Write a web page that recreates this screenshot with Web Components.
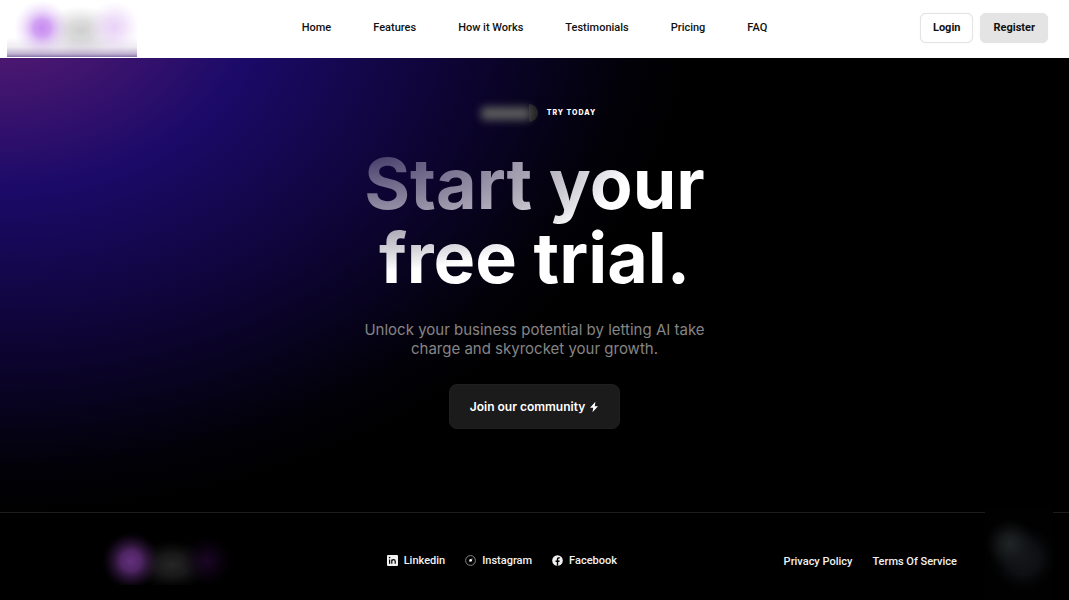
<!DOCTYPE html>
<html lang="en">
<head>
<meta charset="utf-8">
<meta name="viewport" content="width=device-width, initial-scale=1">
<title>Start your free trial</title>
<style>
  body { margin: 0; background: #000; font-family: Inter, "Liberation Sans", sans-serif; }
</style>
</head>
<body>
<landing-page></landing-page>

<script>
const define = (name, html) => {
  const template = document.createElement('template');
  template.innerHTML = html;
  customElements.define(name, class extends HTMLElement {
    constructor() {
      super();
      this.attachShadow({ mode: 'open' }).append(template.content.cloneNode(true));
    }
  });
};

define('header-logo', `
  <style>
    :host { display: block; width: 130px; height: 57px; }
    svg { display: block; width: 100%; height: 100%; }
  </style>
  <svg viewBox="0 0 130 57" aria-hidden="true">
    <defs>
      <radialGradient id="violet"><stop offset="0" stop-color="#c88cf0"/><stop offset=".3" stop-color="#cd98f2" stop-opacity=".9"/><stop offset=".65" stop-color="#dcb8f6" stop-opacity=".42"/><stop offset="1" stop-color="#ead2fa" stop-opacity="0"/></radialGradient>
      <radialGradient id="gray"><stop offset="0" stop-color="#cfcfcf"/><stop offset=".4" stop-color="#d4d4d4" stop-opacity=".8"/><stop offset="1" stop-color="#ddd" stop-opacity="0"/></radialGradient>
      <radialGradient id="pink"><stop offset="0" stop-color="#e9d2f8"/><stop offset=".4" stop-color="#ecd8f9" stop-opacity=".75"/><stop offset="1" stop-color="#f2e4fb" stop-opacity="0"/></radialGradient>
      <linearGradient id="edge" x1="0" y1="0" x2="0" y2="1">
        <stop offset="0" stop-color="#8a72a4" stop-opacity="0"/>
        <stop offset=".5" stop-color="#8a72a4" stop-opacity=".14"/>
        <stop offset=".85" stop-color="#7c62a0" stop-opacity=".5"/>
        <stop offset="1" stop-color="#72559a" stop-opacity=".85"/>
      </linearGradient>
    </defs>
    <rect width="130" height="57" fill="#fff"/>
    <ellipse cx="74" cy="31" rx="40" ry="25" fill="url(#gray)"/>
    <ellipse cx="107" cy="27" rx="26" ry="26" fill="url(#pink)"/>
    <ellipse cx="35" cy="28" rx="28" ry="28" fill="url(#violet)"/>
    <rect y="37" width="130" height="20" fill="url(#edge)"/>
  </svg>`);

define('nav-link', `
  <style>
    :host { display: block; }
    a { display: block; color: #111; font: 500 11px/16px Roboto, "Liberation Sans", sans-serif; text-decoration: none; white-space: nowrap; }
  </style>
  <a href="#"><slot></slot></a>`);

define('nav-button', `
  <style>
    :host { display: block; }
    button { display: block; box-sizing: border-box; height: 30px; padding: 0 12px; border: 1px solid #e4e4e4; border-radius: 6px;
      background: #fff; color: #111; font: 700 11px/16px Roboto, "Liberation Sans", sans-serif; box-shadow: 0 0 1px #ddd; }
    :host([filled]) button { background: #e4e4e4; }
  </style>
  <button type="button"><slot></slot></button>`);

define('site-header', `
  <style>
    :host { display: grid; grid-template-columns: 1fr auto 1fr; align-items: center; height: 58px; padding: 0 21px 0 7px; background: #fff; }
    header-logo { align-self: start; }
    nav { display: flex; gap: 42px; padding: 0 0 2px 14px; }
    .actions { display: flex; gap: 7px; justify-content: flex-end; padding-bottom: 3px; }
  </style>
  <header-logo></header-logo>
  <nav>
    <nav-link>Home</nav-link><nav-link>Features</nav-link><nav-link>How it Works</nav-link>
    <nav-link>Testimonials</nav-link><nav-link>Pricing</nav-link><nav-link>FAQ</nav-link>
  </nav>
  <div class="actions"><nav-button>Login</nav-button><nav-button filled>Register</nav-button></div>`);

define('try-badge', `
  <style>
    :host { display: flex; align-items: center; gap: 8px; color: #fff; font-size: 7px; line-height: 20px; font-weight: 800; letter-spacing: 1px; }
    svg { display: block; width: 66px; height: 20px; }
  </style>
  <svg viewBox="0 0 66 20" overflow="visible" aria-hidden="true">
    <defs><filter id="soft" x="-30%" y="-80%" width="160%" height="260%" color-interpolation-filters="sRGB"><feGaussianBlur stdDeviation="4"/></filter></defs>
    <path d="M56 1a9 9 0 0 1 0 18z" fill="#222"/>
    <rect x="8" y="4" width="50" height="13" rx="4" fill="#5c5c5c" filter="url(#soft)"/>
  </svg>
  <span><slot></slot></span>`);

define('cta-button', `
  <style>
    :host { display: block; }
    button { display: flex; align-items: center; gap: 4px; height: 45px; padding: 0 20px; border: 1px solid #202020; border-radius: 8px;
      background: #1b1b1b; color: #fff; font: 600 12px/16px Inter, "Liberation Sans", sans-serif; }
    svg { width: 10px; height: 12px; }
  </style>
  <button type="button"><slot></slot>
    <svg viewBox="0 0 10 12" fill="#fff" aria-hidden="true"><path d="M6.4.8 1 6.8h3.2L3.5 11.3 9 5.2H5.8z"/></svg>
  </button>`);

define('trial-hero', `
  <style>
    :host { display: flex; flex-direction: column; align-items: center; padding: 45px 24px 83px; text-align: center; }
    h1 { margin: 24px 0 0; font-size: 70px; line-height: 74px; font-weight: 700;
      color: transparent; background: radial-gradient(ellipse 80% 84% at 0 0, #3a3060 0%, #787190 35%, #b4b0bc 70%, #dedde2 88%, #fff 100%);
      -webkit-background-clip: text; background-clip: text; }
    p { margin: 25px 0 0; color: #858585; font-size: 15px; line-height: 19px; }
    cta-button { margin-top: 26px; }
  </style>
  <try-badge>TRY TODAY</try-badge>
  <h1>Start your<br>free trial.</h1>
  <p>Unlock your business potential by letting AI take<br>charge and skyrocket your growth.</p>
  <cta-button>Join our community</cta-button>`);

define('footer-logo', `
  <style>
    :host { display: block; width: 108px; height: 64px; }
    svg { display: block; width: 100%; height: 100%; }
  </style>
  <svg viewBox="0 0 108 64" overflow="visible" aria-hidden="true">
    <defs>
      <radialGradient id="violet"><stop offset="0" stop-color="#62307c"/><stop offset=".35" stop-color="#58296f" stop-opacity=".9"/><stop offset=".7" stop-color="#3a1a4a" stop-opacity=".45"/><stop offset="1" stop-color="#200c2c" stop-opacity="0"/></radialGradient>
      <radialGradient id="gray"><stop offset="0" stop-color="#262626"/><stop offset=".45" stop-color="#202020" stop-opacity=".75"/><stop offset="1" stop-color="#111" stop-opacity="0"/></radialGradient>
      <radialGradient id="plum"><stop offset="0" stop-color="#1c0626"/><stop offset="1" stop-color="#10031a" stop-opacity="0"/></radialGradient>
      <clipPath id="cut"><rect x="-24" y="-10" width="160" height="70"/></clipPath>
    </defs>
    <g clip-path="url(#cut)">
      <ellipse cx="60" cy="40" rx="38" ry="25" fill="url(#gray)"/>
      <circle cx="95" cy="36" r="25" fill="url(#plum)"/>
      <circle cx="19" cy="36" r="29" fill="url(#violet)"/>
    </g>
  </svg>`);

define('footer-link', `
  <style>
    :host { display: block; }
    a { display: flex; align-items: center; gap: 6px; color: #f2f2f2; font: 500 11px/16px Roboto, "Liberation Sans", sans-serif; text-decoration: none; white-space: nowrap; }
  </style>
  <a href="#"><slot name="icon"></slot><slot></slot></a>`);

define('site-footer', `
  <style>
    :host { display: flex; align-items: center; justify-content: space-between; height: 87px; padding: 0 112px; border-top: 1px solid #1c1c1c; background: #000; }
    .social, .legal { display: flex; gap: 20px; padding-top: 8px; }
    .legal { padding-top: 10px; }
    svg { display: block; width: 11px; height: 11px; }
  </style>
  <footer-logo></footer-logo>
  <div class="social">
    <footer-link><svg slot="icon" viewBox="0 0 11 11" aria-hidden="true"><rect width="11" height="11" rx="1" fill="#f2f2f2"/><path d="M2.6 4.4v4.4M4.8 4.4v4.4M4.8 6.5c0-2.4 3.4-2.4 3.4 0v2.3" fill="none" stroke="#000" stroke-width="1.2"/><circle cx="2.6" cy="2.6" r=".8"/></svg>Linkedin</footer-link>
    <footer-link><svg slot="icon" viewBox="0 0 11 11" aria-hidden="true"><circle cx="5.5" cy="5.5" r="4.9" fill="none" stroke="#858585"/><path d="M7.9 3.1 6.5 6.5 3.7 7.3 4.5 4.6z" fill="#666"/><circle cx="5.7" cy="5.3" r="1.2" fill="#fff"/></svg>Instagram</footer-link>
    <footer-link><svg slot="icon" viewBox="0 0 11 11" aria-hidden="true"><circle cx="5.5" cy="5.5" r="5.3" fill="#f2f2f2"/><path d="M4.8 10.8V6.9H3.5V5.4h1.3V4.3c0-1.5.8-2.1 2-2.1h1v1.3H7c-.6 0-.8.3-.8.9v1h1.5l-.3 1.5H6.2v3.9z"/></svg>Facebook</footer-link>
  </div>
  <div class="legal"><footer-link>Privacy Policy</footer-link><footer-link>Terms Of Service</footer-link></div>`);

define('help-bubble', `
  <style>
    :host { display: block; width: 68px; height: 94px; background: #010101; }
    svg { display: block; width: 100%; height: 100%; }
  </style>
  <svg viewBox="0 0 68 94" aria-hidden="true">
    <defs>
      <radialGradient id="mist"><stop offset="0" stop-color="#1f2425"/><stop offset=".4" stop-color="#1a1e1f" stop-opacity=".8"/><stop offset="1" stop-color="#101214" stop-opacity="0"/></radialGradient>
      <radialGradient id="slate"><stop offset="0" stop-color="#14161b"/><stop offset=".5" stop-color="#111317" stop-opacity=".8"/><stop offset="1" stop-color="#08090b" stop-opacity="0"/></radialGradient>
    </defs>
    <circle cx="38" cy="52" r="33" fill="url(#slate)"/><circle cx="25" cy="38" r="25" fill="url(#mist)"/>
  </svg>`);

define('landing-page', `
  <style>
    :host { display: block; position: relative; min-height: 100vh; background: radial-gradient(ellipse 65% 515px at 0 0, #601e74 0%, #1b0a68 37%, #0c042e 70%, #020108 91%, #000 100%) #000; }
    help-bubble { position: absolute; right: 16px; bottom: 0; }
  </style>
  <site-header></site-header>
  <main><trial-hero></trial-hero></main>
  <site-footer></site-footer>
  <help-bubble></help-bubble>`);
</script>
</body>
</html>
